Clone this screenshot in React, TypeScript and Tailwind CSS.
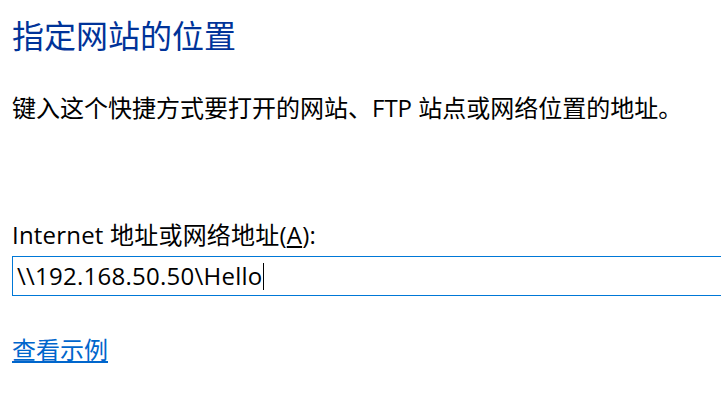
export default function App() {
  return (
    <div
      className="w-[721px] h-[415px] overflow-hidden bg-white pl-3 flex flex-col"
      style={{ fontFamily: '"Segoe UI", "Open Sans", "Noto Sans CJK SC", sans-serif' }}
    >
      <h1 className="mt-[18px] text-[32px] leading-[36px] font-normal text-[#003399]">
        指定网站的位置
      </h1>
      <p className="mt-[39px] text-[24px] leading-[30px] text-black">
        键入这个快捷方式要打开的网站、FTP 站点或网络位置的地址。
      </p>
      <label className="mt-[97px] text-[24px] leading-[30px] text-black tracking-[0.2px]">
        Internet 地址或网络地址(<span className="underline underline-offset-2">A</span>):
      </label>
      <div className="mt-[6px] h-[40px] w-[720px] border border-[#0078d7] flex items-center pl-1">
        <span className="text-[24px] leading-[30px] text-black tracking-[0.25px]">\\192.168.50.50\Hello</span>
        <span className="w-px h-[27px] bg-black" />
      </div>
      <a href="#" className="mt-[39px] self-start text-[24px] leading-[30px] text-[#0066cc] underline underline-offset-2">
        查看示例
      </a>
    </div>
  );
}
